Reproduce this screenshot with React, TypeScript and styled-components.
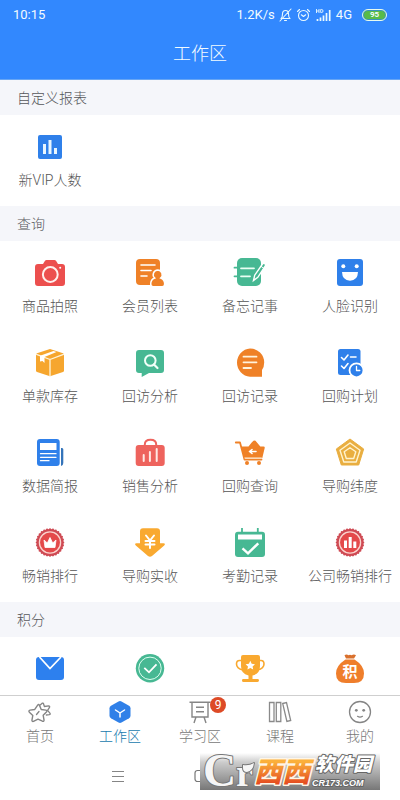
import React from "react";
import styled, { createGlobalStyle } from "styled-components";

const BLUE = "#2f80ea";
const ORANGE = "#ef8127";
const YELLOW = "#f9a930";
const GREEN = "#47b893";
const RED = "#ec4f4e";

const GlobalStyle = createGlobalStyle`
  *, *::before, *::after { box-sizing: border-box; }
  body {
    margin: 0;
    background: #fff;
    font-family: Roboto, "Noto Sans CJK SC", sans-serif;
  }
  button {
    margin: 0;
    padding: 0;
    border: 0;
    background: none;
    font: inherit;
    color: inherit;
    cursor: pointer;
  }
`;

const Screen = styled.div`
  display: flex;
  flex-direction: column;
  height: 100vh;
  background: #fff;
`;

const Header = styled.header`
  flex: none;
  background: #3288fe;
  color: #f2fbff;
  border-bottom: 1px solid #68a6f4;
`;

const StatusBar = styled.div`
  display: flex;
  align-items: center;
  justify-content: space-between;
  height: 30px;
  padding: 0 13px;
  font: 13px/20px Roboto, "Noto Sans", sans-serif;
`;

const StatusGroup = styled.div`
  display: flex;
  align-items: center;
  gap: 4px;
`;

const Battery = styled.span`
  display: flex;
  align-items: center;
  justify-content: center;
  width: 25px;
  height: 12px;
  margin-left: 6px;
  border: 1px solid #e9fbef;
  border-radius: 6px;
  background: #58bb48;
  box-shadow: inset 0 0 0 1px #3a93b8;
  font: bold 8px/10px Roboto, sans-serif;
`;

const Title = styled.h1`
  margin: 0;
  padding: 11px 0 12px;
  font-size: 18px;
  line-height: 26px;
  font-weight: 300;
  text-align: center;
`;

const Content = styled.main`
  flex: 1;
  min-height: 0;
  overflow-y: auto;
  scrollbar-width: none;
`;

const SectionTitle = styled.h2`
  height: 36px;
  margin: 0;
  padding: 0 17px;
  border-bottom: 1px solid #fff;
  background: #f5f6fa;
  color: #55575b;
  font-size: 14px;
  line-height: 36px;
  font-weight: 300;
`;

const Grid = styled.div`
  display: grid;
  grid-template-columns: repeat(4, 1fr);
`;

const Tile = styled.button`
  display: flex;
  flex-direction: column;
  align-items: center;
  gap: 7px;
  height: 90px;
  padding-top: 16px;
  color: #555;
  font-size: 14px;
  line-height: 22px;
  font-weight: 300;
  white-space: nowrap;
`;

const TileIcon = styled.svg`
  flex: none;
  width: 30px;
  height: 30px;
  overflow: visible;
`;

const TabBar = styled.nav`
  flex: none;
  display: grid;
  grid-template-columns: repeat(5, 1fr);
  height: 52px;
  border-top: 1px solid #cfcfcf;
  background: #fff;
`;

const Tab = styled.button<{ $active?: boolean }>`
  display: flex;
  flex-direction: column;
  align-items: center;
  gap: 2px;
  padding-top: 4px;
  color: ${(p) => (p.$active ? "#2079ae" : "#787878")};
  font-size: 14px;
  line-height: 20px;
  font-weight: 300;
`;

const TabIconBox = styled.span`
  position: relative;
  display: block;
  width: 24px;
  height: 24px;
`;

const TabIcon = styled.svg`
  display: block;
  width: 24px;
  height: 24px;
  overflow: visible;
`;

const Badge = styled.span`
  position: absolute;
  top: -3px;
  left: 22px;
  width: 16px;
  height: 16px;
  border-radius: 50%;
  background: #dd4a26;
  color: #fff;
  font: 12px/16px Roboto, sans-serif;
  text-align: center;
`;

const SystemBar = styled.footer`
  position: relative;
  flex: none;
  display: flex;
  justify-content: center;
  height: 53px;
  padding-top: 22px;
  background: #fff;
`;

const SystemKeys = styled.div`
  display: flex;
  align-items: flex-start;
  gap: 69px;
  width: 176px;
`;

const SystemKey = styled.button`
  width: 13px;
  height: 14px;
  svg { display: block; }
`;

const Watermark = styled.div`
  position: absolute;
  right: 20px;
  top: 6px;
  width: 180px;
  height: 37px;
  background: linear-gradient(#ffffff, #cccccc 25%, #777777);
`;

const WatermarkArt = styled.svg`
  display: block;
  width: 180px;
  height: 37px;
  overflow: visible;
`;

const line = { fill: "none", strokeLinecap: "round", strokeLinejoin: "round" } as const;

const scallops = Array.from({ length: 28 }, (_, i) => {
  const a = (i * Math.PI) / 14;
  return { cx: 15 + 13.2 * Math.cos(a), cy: 14.5 + 13.2 * Math.sin(a) };
});

const Medal = ({ children }: { children: React.ReactNode }) => (
  <>
    <g fill="#cf4b54">
      <circle cx="15" cy="14.5" r="13.5" />
      {scallops.map((s, i) => (
        <circle key={i} cx={s.cx} cy={s.cy} r="1.1" />
      ))}
    </g>
    <circle cx="15" cy="14.5" r="10.6" fill="#e4494a" stroke="#fbd5cf" strokeWidth="1.3" />
    {children}
  </>
);

const icons: Record<string, React.ReactNode> = {
  chart: (
    <>
      <rect x="3" y="3" width="24" height="24" rx="2" fill={BLUE} />
      <path d="M8 12h3v10H8zM13.500 8h3v14h-3zM19 16h3v6h-3z" fill="#e8f6ff" />
    </>
  ),
  camera: (
    <>
      <path d="M3 6h5l2-3.200q.6-.8 1.600-.8h7.800q1 0 1.600.8L23 6h4q3 0 3 3v16q0 3-3 3H3q-3 0-3-3V9q0-3 3-3z" fill={RED} />
      <circle cx="15.300" cy="16.500" r="7.400" fill="none" stroke="#fff0ed" strokeWidth="2" />
      <circle cx="25.200" cy="9.700" r="1" fill="#fff" />
    </>
  ),
  members: (
    <>
      <rect x="1" y="1" width="24" height="26" rx="4" fill={ORANGE} />
      <path d="M6 7h14M6 12.500h10M6 18h6" {...line} stroke="#fff" strokeWidth="1.600" />
      <path d="M22.700 12a4.600 4.600 0 0 1 3 8q4 1.500 4 6 0 2.700-2.500 2.700h-9q-2.500 0-2.500-2.700 0-4.500 4-6a4.600 4.600 0 0 1 3-8z" fill={ORANGE} stroke="#fff" strokeWidth="1.500" />
    </>
  ),
  memo: (
    <>
      <rect x="2" y="0" width="24" height="28" rx="5" fill={GREEN} />
      <path d="M-.5 9.700H3M-.5 18.300H3" {...line} stroke={GREEN} strokeWidth="1.800" />
      <path d="M6 10.300h13M6 18.300h9" {...line} stroke="#eafff4" strokeWidth="1.800" />
      <path d="M18.500 22.500l1.200-5.300L27.500 6q1-1.200 2.300-.3 1.300 1 .5 2.300L22.800 19.300z" fill={GREEN} stroke="#fff" strokeWidth="1.400" />
      <path d="M26 8.300l2.800 2" stroke="#fff" strokeWidth="1" />
    </>
  ),
  face: (
    <>
      <rect x="2" y="1" width="26" height="27" rx="3" fill={BLUE} />
      <g fill="#fff">
        <circle cx="8.300" cy="8.300" r="2" />
        <circle cx="21.700" cy="8.300" r="2" />
        <path d="M7 14h16q-.3 8.500-8 8.700Q7.300 22.500 7 14z" />
      </g>
    </>
  ),
  box: (
    <>
      <path d="M15 1l13 4.300q1 .5 1 1.700v15.500q0 1-1 1.500l-13 4.300L2 24q-1-.5-1-1.500V7q0-1.200 1-1.700z" fill="#f6a62e" />
      <path d="M1.500 6.300L15 11.500 28.500 6.300M15 11.500V28" {...line} stroke="#fff4d9" strokeWidth="1.300" />
      <path d="M5 7.800L18.500 3l3 1L9.500 9v6l-2-2-2.500.5z" fill="#fff" />
    </>
  ),
  visitSearch: (
    <>
      <path d="M4 2h22q3 0 3 3v17q0 3-3 3H14l-7.300 4V25H4q-3 0-3-3V5q0-3 3-3z" fill={GREEN} />
      <circle cx="15.300" cy="12.500" r="5.300" fill="none" stroke="#f1fff8" strokeWidth="2" />
      <path d="M19 16.500l3.500 3.500" {...line} stroke="#f1fff8" strokeWidth="2.200" />
    </>
  ),
  visitRecord: (
    <>
      <path d="M15 .4a14.200 14.200 0 0 1 14.200 14.200q0 4.500-2.200 7.500v6.600H15A14.200 14.200 0 0 1 15 .4z" fill={ORANGE} />
      <path d="M8.500 8.700h13M8.500 14.300h13M8.500 20H16" {...line} stroke="#fff3dd" strokeWidth="1.800" />
    </>
  ),
  plan: (
    <>
      <rect x="3" y="1" width="22.500" height="26" rx="2.500" fill={BLUE} />
      <path d="M6.500 9.500L9 12l4-5M6.500 18L9 20.500l4-5M15.500 9H21" {...line} stroke="#fff" strokeWidth="1.600" />
      <circle cx="21.500" cy="22.300" r="7" fill={BLUE} stroke="#fff" strokeWidth="1.800" />
      <path d="M21.500 18.500v4h3.300" {...line} stroke="#fff" strokeWidth="1.300" />
    </>
  ),
  report: (
    <>
      <rect x="2" y="1" width="22.700" height="27" rx="3" fill={BLUE} />
      <path d="M5 5h16.500v7H5z" fill="#fff" />
      <path d="M5.500 15.700h15.500M5.500 19.300h15.500M5.500 22.700H14" {...line} stroke="#fff" strokeWidth="1.300" />
      <path d="M26 10h1q1.300 0 1.300 1.500V25q0 2.500-2.300 3z" fill="#3474ba" />
    </>
  ),
  bag: (
    <>
      <rect x=".7" y="7" width="29" height="21" rx="3" fill="#ee635d" />
      <path d="M9.800 8V6.500q0-4.700 5.700-4.700T21.200 6.500V8" fill="none" stroke="#ee635d" strokeWidth="2" />
      <path d="M8.700 17v6M14.900 14v9M21.700 11v12" {...line} stroke="#ffe8e4" strokeWidth="2" />
    </>
  ),
  cart: (
    <>
      <path d="M.8 4.500H5l4.500 17h17" {...line} stroke={ORANGE} strokeWidth="1.800" />
      <path d="M6 8.500h7.500l3.200-4 1.800-1.700q1-.8 2 0l4.800 5.700h3.200q1.500 0 1.200 1.500l-2.400 10H9z" fill={ORANGE} />
      <path d="M9.500 20h17.300" stroke="#fff0dd" strokeWidth="1" />
      <circle cx="12" cy="25" r="2" fill={ORANGE} />
      <circle cx="24" cy="25" r="2" fill={ORANGE} />
      <path d="M15 13.500h6M17 11.500l-2.500 2 2.500 2" {...line} stroke="#fff" strokeWidth="1.600" />
    </>
  ),
  pentagon: (
    <>
      <polygon points="15,1 28.7,11 23.7,27 6.3,27 1.3,11" fill="#e9ae40" stroke="#e9ae40" strokeWidth="1" strokeLinejoin="round" />
      <g fill="none" stroke="#fff3cf" strokeLinejoin="round">
        <polygon points="15,5 25,12.300 21.200,24 8.800,24 5,12.300" strokeWidth="1.400" />
        <polygon points="15,9.700 20.800,13.800 18.700,20.500 11.300,20.500 9.200,13.800" strokeWidth="1.400" />
      </g>
    </>
  ),
  medalCrown: (
    <Medal>
      <path d="M9 12l3.300 3L15 9.500l2.700 5.500 3.300-3-1 7.500H10z" fill="#fff" stroke="#fff" strokeWidth=".8" strokeLinejoin="round" />
    </Medal>
  ),
  income: (
    <>
      <path d="M8 .3h14q3 0 3 3v12h3.500q2.500.2.700 2.200L17 28q-2 1.600-4 0L.8 17.500Q-1 15.500 1.500 15.300H5v-12q0-3 3-3z" fill={YELLOW} />
      <path d="M11 7.500l4 5 4-5M10.500 13h9M10.500 16.500h9M15 12.500V20" {...line} stroke="#fff" strokeWidth="2" />
    </>
  ),
  calendar: (
    <>
      <rect x="0" y="3.700" width="30" height="25.300" rx="3" fill={GREEN} />
      <path d="M7 0v5M22.800 0v5" stroke={GREEN} strokeWidth="1.800" />
      <path d="M3 6.500h24v5H3z" fill="#fff" />
      <path d="M7.500 20.300l5.500 5 10.300-10" fill="none" stroke="#fff" strokeWidth="2.400" />
    </>
  ),
  medalBars: (
    <Medal>
      <path d="M9 12.500h3V20H9zM13.700 9h3v11h-3zM18.300 13.500h3V20h-3z" fill="#fff" />
    </Medal>
  ),
  mail: (
    <>
      <rect x="1" y="3" width="28" height="23" rx="3" fill="#2d80ee" />
      <path d="M4.500 3L15 14.500 26 3" fill="none" stroke="#fff" strokeWidth="1.800" />
    </>
  ),
  approve: (
    <>
      <circle cx="15" cy="14.300" r="14.200" fill={GREEN} />
      <circle cx="15" cy="14.300" r="11.200" fill="none" stroke="#ddfff0" strokeWidth="1" />
      <path d="M9.300 13.800l4.700 4.500 7.500-8" fill="none" stroke="#fff" strokeWidth="1.800" />
    </>
  ),
  trophy: (
    <>
      <path d="M6 6.500H4.500Q1.500 6.500 1.500 10q0 4.500 6.500 6M24.500 6.500H26q3 0 3 3.500 0 4.500-6.500 6" fill="none" stroke={YELLOW} strokeWidth="1.600" />
      <path d="M8 1h15q2 0 2 2v9q0 8-7.500 9.500V25h5q1.500 0 1.500 1.400T22.500 28h-14Q7 28 7 26.400T8.500 25h5v-3.500Q6 20 6 12V3q0-2 2-2z" fill={YELLOW} />
      <path d="M15.300 6.800l1.400 3 3.300.4-2.400 2.200.6 3.200-2.900-1.600-2.900 1.600.6-3.200-2.400-2.200 3.300-.4z" fill="#fff" />
    </>
  ),
  points: (
    <>
      <path d="M9.500 1.300q2-1.500 4 0 1.500-1 3 0 2.500-1.500 4.500 0L19 4.500h-8z" fill="#d9702c" />
      <path d="M10.500 5.500h9q9.500 6 9.500 14Q29 29 19 29h-8Q1 29 1 19.500q0-8 9.500-14z" fill="#ef7e2b" />
      <text x="15" y="22.500" textAnchor="middle" fontSize="15" fontWeight="bold" fill="#fff">积</text>
    </>
  ),
};

const STAR = "M9.700 4.300Q10.500 3 11.400 4.500L13 8.300l4.300.6q1.700.4.500 1.800l-3 3 .8 4.400q0 1.700-1.500 1.100L10 17.300l-4.200 2q-1.500.4-1.400-1.200l.8-4.300L2 10.800q-1-1.500.6-1.900l4.400-.6z";

const tabIcons: Record<string, React.ReactNode> = {
  home: (
    <g {...line} stroke="#858585" strokeWidth="1.300">
      <path d={STAR} transform="translate(-.8 .5) scale(1.080)" />
      <path d="M12.500 4.700l1.700-1.500q1-.5 1.300.6l.9 2.700 4.200-.6q1.500.1.900 1.500l-1.900 3 2.300 2.800q.8 1.300-.6 1.500l-3 .3" />
      <path d="M8.500 14.500l2.500-3" />
    </g>
  ),
  work: (
    <>
      <path d="M10.500 1.500q1.500-.8 3 0l7.500 4.300q1.500.9 1.500 2.500v7.500q0 1.600-1.500 2.500l-7.500 4.300q-1.500.8-3 0L3 18.300q-1.500-.9-1.500-2.500V8.300q0-1.600 1.500-2.500z" fill="#2f80e8" />
      <path d="M7.500 10l4.500 3 4.500-3M12 13v4" {...line} stroke="#fff" strokeWidth="1.500" />
    </>
  ),
  study: (
    <g fill="none" stroke="#858585" strokeWidth="1.400">
      <path d="M1.500 2.300h21M4 2.300V17h16V2.300M8 17l-2 6M16 17l2 6M8 7.300h8M8 11.700h8" />
    </g>
  ),
  course: (
    <g fill="none" stroke="#8a8a8a" strokeWidth="1.300">
      <path d="M1.500 2.500H6v19H1.500zM8.300 2.500h4.500v19H8.300zM14.700 3.500l3.800-1 4.200 18-3.800 1z" />
    </g>
  ),
  mine: (
    <>
      <circle cx="12" cy="12" r="10.500" fill="none" stroke="#858585" strokeWidth="1.300" />
      <circle cx="8.300" cy="10.300" r="1.400" fill="#858585" />
      <circle cx="15.700" cy="10.300" r="1.400" fill="#858585" />
      <path d="M9.500 16.300q2.500 1.500 5 0" {...line} stroke="#858585" strokeWidth="1.200" />
    </>
  ),
};

type Item = { icon: string; label?: string; name?: string };

const sections: { title: string; items: Item[] }[] = [
  { title: "自定义报表", items: [{ icon: "chart", label: "新VIP人数" }] },
  {
    title: "查询",
    items: [
      { icon: "camera", label: "商品拍照" },
      { icon: "members", label: "会员列表" },
      { icon: "memo", label: "备忘记事" },
      { icon: "face", label: "人脸识别" },
      { icon: "box", label: "单款库存" },
      { icon: "visitSearch", label: "回访分析" },
      { icon: "visitRecord", label: "回访记录" },
      { icon: "plan", label: "回购计划" },
      { icon: "report", label: "数据简报" },
      { icon: "bag", label: "销售分析" },
      { icon: "cart", label: "回购查询" },
      { icon: "pentagon", label: "导购纬度" },
      { icon: "medalCrown", label: "畅销排行" },
      { icon: "income", label: "导购实收" },
      { icon: "calendar", label: "考勤记录" },
      { icon: "medalBars", label: "公司畅销排行" },
    ],
  },
  {
    title: "积分",
    items: [
      { icon: "mail", name: "消息" },
      { icon: "approve", name: "审核" },
      { icon: "trophy", name: "奖杯" },
      { icon: "points", name: "积分" },
    ],
  },
];

const tabs = [
  { icon: "home", label: "首页" },
  { icon: "work", label: "工作区", active: true },
  { icon: "study", label: "学习区", badge: 9 },
  { icon: "course", label: "课程" },
  { icon: "mine", label: "我的" },
];

const StatusIcons = () => (
  <>
    <svg width="13" height="14" viewBox="0 0 13 14" {...line} stroke="#eafaff" strokeWidth="1.100">
      <path d="M2 10.500q1.500-1 1.500-4.500 0-3.500 3-3.500t3 3.500q0 3.500 1.500 4.500zM5.500 12.500h2M12 1L1 13" />
    </svg>
    <svg width="15" height="14" viewBox="0 0 15 14" {...line} stroke="#eafaff" strokeWidth="1.100">
      <circle cx="7.500" cy="7.500" r="5" />
      <path d="M5.300 6.800l2.200 1.700 2.200-1.700M1.500 3.500l2-2M13.500 3.500l-2-2" />
    </svg>
    <svg width="17" height="14" viewBox="0 0 17 14" fill="none" stroke="#eafaff">
      <path d="M1.500 1v4M4 1v4M1.500 3H4M5.700 1.500v3h1q1.300 0 1.300-1.500T6.700 1.500z" strokeWidth=".9" />
      <path d="M2.500 13v-2M5.500 13v-3.500M8.500 13V7.500M11.500 13V5M14.700 13V2" strokeWidth="1.700" />
    </svg>
  </>
);

const Logo = () => (
  <WatermarkArt viewBox="0 0 180 37" role="img" aria-label="西西软件园 CR173.COM">
    <defs>
      <linearGradient id="flame" x1="0" y1="0" x2="0" y2="1">
        <stop offset="0.3" stopColor="#fbb03b" />
        <stop offset="0.85" stopColor="#e4491f" />
      </linearGradient>
    </defs>
    <g fontFamily="Liberation Serif, serif" fill="#f6f6f6" stroke="#777" strokeWidth="2" strokeLinejoin="round" paintOrder="stroke">
      <g fontWeight="bold">
        <text x="3" y="33" fontSize="46">C</text>
        <text x="36" y="33" fontSize="38">r</text>
      </g>
      <path d="M43 12q6 1 11-2-1 8-7 9-4 0-4-4z" />
    </g>
    <g fontFamily="Noto Sans CJK SC, sans-serif" fontWeight="900" fontStyle="italic" strokeLinejoin="round" paintOrder="stroke">
      <text x="54" y="29" fontSize="28" fill="url(#flame)" stroke="#fff6e6" strokeWidth="3">西西</text>
      <text x="115" y="18" fontSize="19" fill="#fff" stroke="#666" strokeWidth="2">软件园</text>
    </g>
    <text x="112" y="33" fontFamily="Liberation Sans, sans-serif" fontSize="9" fontStyle="italic" fontWeight="bold" fill="#fff" stroke="#666" strokeWidth="2" paintOrder="stroke">CR173.COM</text>
  </WatermarkArt>
);

export default function App() {
  return (
    <Screen>
      <GlobalStyle />
      <Header>
        <StatusBar>
          <time>10:15</time>
          <StatusGroup>
            <span>1.2K/s</span>
            <StatusIcons />
            <span>4G</span>
            <Battery>95</Battery>
          </StatusGroup>
        </StatusBar>
        <Title>工作区</Title>
      </Header>
      <Content>
        {sections.map((section) => (
          <section key={section.title}>
            <SectionTitle>{section.title}</SectionTitle>
            <Grid>
              {section.items.map((item) => (
                <Tile key={item.icon} type="button" aria-label={item.name}>
                  <TileIcon viewBox="0 0 30 30" aria-hidden="true">
                    {icons[item.icon]}
                  </TileIcon>
                  {item.label}
                </Tile>
              ))}
            </Grid>
          </section>
        ))}
      </Content>
      <TabBar>
        {tabs.map((tab) => (
          <Tab key={tab.icon} type="button" $active={tab.active} aria-current={tab.active ? "page" : undefined}>
            <TabIconBox>
              <TabIcon viewBox="0 0 24 24" aria-hidden="true">
                {tabIcons[tab.icon]}
              </TabIcon>
              {tab.badge && <Badge>{tab.badge}</Badge>}
            </TabIconBox>
            {tab.label}
          </Tab>
        ))}
      </TabBar>
      <SystemBar>
        <SystemKeys>
          <SystemKey type="button" aria-label="菜单">
            <svg width="13" height="14" viewBox="0 0 13 14" stroke="#858585" strokeWidth="1">
              <path d="M0 2.500h12M0 7.500h12M0 12.500h12" />
            </svg>
          </SystemKey>
          <SystemKey type="button" aria-label="主屏幕">
            <svg width="13" height="14" viewBox="0 0 13 14" fill="none" stroke="#777" strokeWidth="1.200">
              <rect x="1" y="1.500" width="11" height="11" rx="2.500" />
            </svg>
          </SystemKey>
        </SystemKeys>
        <Watermark>
          <Logo />
        </Watermark>
      </SystemBar>
    </Screen>
  );
}
